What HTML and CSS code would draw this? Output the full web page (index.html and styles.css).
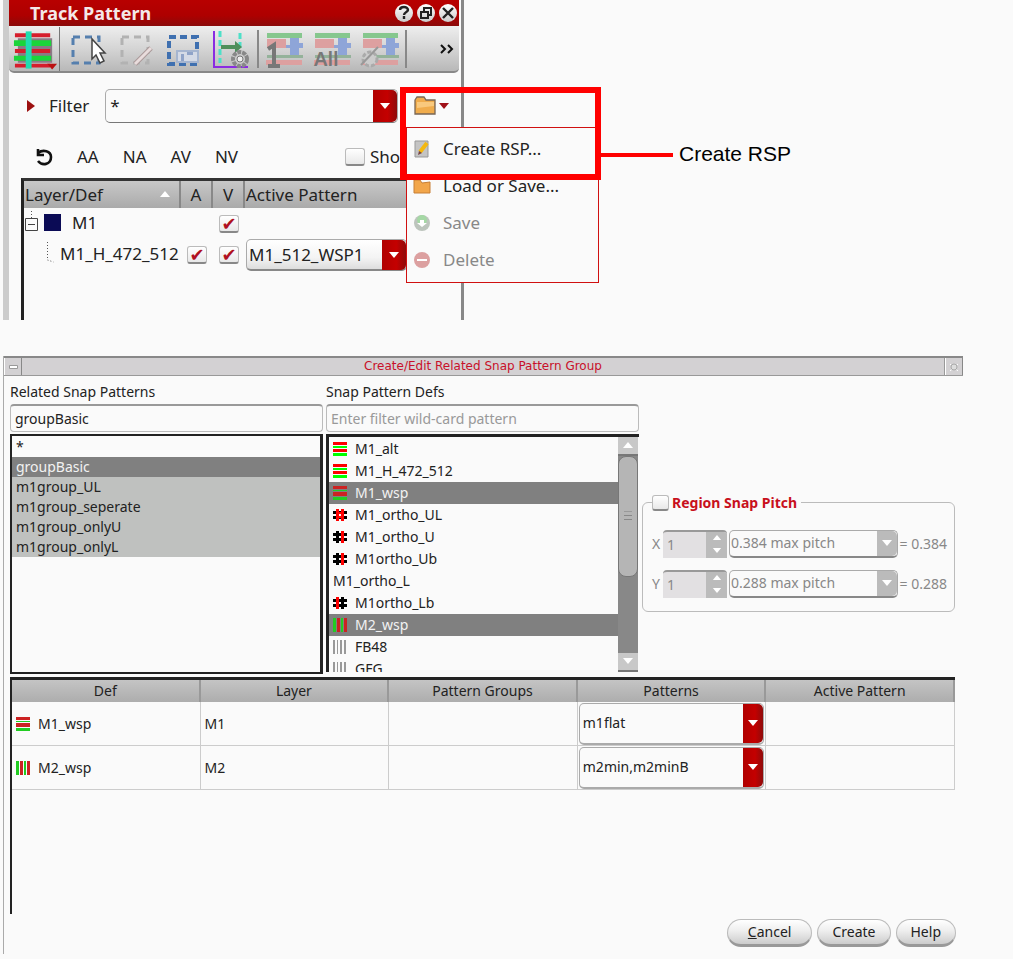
FILE: index.html
```html
<!DOCTYPE html>
<html lang="en">
<head>
<meta charset="utf-8">
<title>Create/Edit Related Snap Pattern Group</title>
<link rel="stylesheet" href="styles.css">
</head>
<body>
<svg class="defs" aria-hidden="true">
  <symbol id="bars-h" viewBox="0 0 14 14"><path fill="#f00" d="M0 0h14v3H0zM0 7h14v3H0z"/><path fill="#0f0" d="M0 4h14v2H0zM0 11h14v3H0z"/></symbol>
  <symbol id="bars-h-dark" viewBox="0 0 14 14"><path fill="#c22" d="M0 0h14v3H0zM0 6h14v4H0z"/><path fill="#2c2" d="M0 4h14v1H0zM0 11h14v3H0z"/></symbol>
  <symbol id="bars-v" viewBox="0 0 14 14"><path fill="#2c2" d="M0 0h3v14H0zM8 0h2v14H8z"/><path fill="#c22" d="M4 0h3v14H4zM11 0h3v14h-3z"/></symbol>
  <symbol id="bars-grey" viewBox="0 0 14 14"><path fill="#999" d="M0 0h2v14H0zM4 0h1v14H4zM7 0h2v14H7zM11 0h2v14h-2z"/></symbol>
  <symbol id="hash-red" viewBox="0 0 14 14"><path fill="#000" d="M0 3h14v3H0zM0 8h14v3H0z"/><path fill="#f00" d="M3 1h3v12H3zM8 1h3v12H8zM3 4h8v2H3zM3 8h8v2H3z"/></symbol>
  <symbol id="hash-right" viewBox="0 0 14 14"><path fill="#000" d="M0 3h14v3H0zM0 8h14v3H0zM3 1h3v12H3z"/><path fill="#f00" d="M8 1h3v12H8z"/></symbol>
  <symbol id="hash-left" viewBox="0 0 14 14"><path fill="#000" d="M0 3h14v3H0zM0 8h14v3H0zM8 1h3v12H8z"/><path fill="#f00" d="M3 1h3v12H3z"/></symbol>
  <symbol id="folder" viewBox="0 0 24 20"><path fill="#f0ac4c" stroke="#765" stroke-width="1.3" d="M1 4l2-3h7l2 3h9v14H1z"/><path fill="#f9c97d" d="M3 6h17v4L3 12z"/></symbol>
  <symbol id="down" viewBox="0 0 12 7"><path fill="currentColor" d="M1 0h10L6 6z"/></symbol>
  <symbol id="up" viewBox="0 0 12 7"><path fill="currentColor" d="M1 6h10L6 0z"/></symbol>
  <symbol id="swap" viewBox="0 0 38 38"><path fill="#86c78e" d="M1 2h35v5H1z"/><path fill="#dda0a0" d="M1 8h19v9H1zM0 29h36v5H0z"/><path fill="#8ea5d8" d="M24 7h9v5h4v5h-4v9h-9v-9h-4v-3h4z"/><path fill="#94b29a" d="M1 24h36v3H1z"/></symbol>
</svg>

<main class="page">
  <section class="track">
    <header class="track-head">
      <h1 class="track-title">Track Pattern</h1>
      <button class="orb" aria-label="Help"><svg viewBox="0 0 18 18"><path d="M5 6c0-4 8-4 8 0 0 2-4 2-4 5M9 12v3" fill="none" stroke="#222" stroke-width="2.4"/></svg></button>
      <button class="orb" aria-label="Float"><svg viewBox="0 0 18 18"><path d="M7 7V4h7v7h-3M4 8h7v6H4z" fill="none" stroke="#222" stroke-width="2"/></svg></button>
      <button class="orb" aria-label="Close"><svg viewBox="0 0 18 18"><path d="M4 4l10 10M14 4L4 14" fill="none" stroke="#222" stroke-width="2.4"/></svg></button>
    </header>

    <div class="toolbar">
      <button class="tool tool-first" aria-label="Tracks"><svg viewBox="0 0 48 44"><path fill="#8a7a86" d="M6 11h35v25H6z"/><path fill="#d61d2c" d="M3 6h36v4H3zM3 22h36v4H3zM3 37h36v4H3z"/><path fill="#1bd43a" d="M2 13h38v6H2zM2 29h38v5H2z"/><path fill="#1fddb0" d="M14 4h6v38h-6z"/><path fill="#b11" d="M36 37h10l-5 6z"/></svg></button>
      <button class="tool" aria-label="Select area"><svg viewBox="0 0 48 44"><path fill="none" stroke="#557fae" stroke-width="3" stroke-dasharray="7 5" d="M9 10h26v26H9z"/><path fill="#fff" stroke="#444" stroke-width="1.5" d="M28 12v20l4-4 4 8 4-2-4-8h5z"/></svg></button>
      <button class="tool" aria-label="Edit area"><svg viewBox="0 0 48 44"><path fill="none" stroke="#b2b2b2" stroke-width="3" stroke-dasharray="7 5" d="M10 10h26v26H10z"/><path stroke="#a99" stroke-width="5" d="M23 37l16-16"/><path stroke="#e8dcdc" stroke-width="3" d="M23 37l16-16"/></svg></button>
      <button class="tool" aria-label="Save area"><svg viewBox="0 0 48 44"><path fill="none" stroke="#3f70b0" stroke-width="4" stroke-dasharray="7 4" d="M9 10h28v27H9z"/><path fill="#d4dae6" stroke="#a5b5d0" stroke-width="2" d="M17 24h21v11H17z"/><path fill="#8fa3c8" d="M21 27h3v7h-3zM27 25h6v3h-6z"/></svg></button>
      <button class="tool" aria-label="Track options"><svg viewBox="0 0 48 44"><path stroke="#8a2be2" stroke-width="2" fill="none" d="M6 4v36h34"/><path stroke="#4de0c8" stroke-width="3" stroke-dasharray="6 3" d="M12 4v32M32 6v18"/><path fill="#4f8f5c" d="M13 18h14v-4l7 6-7 6v-4H13z"/><circle cx="32" cy="32" r="7" fill="#ccc" stroke="#888" stroke-width="4" stroke-dasharray="4 1"/><circle cx="32" cy="32" r="3" fill="#eee" stroke="#777"/></svg></button>
      <span class="sep"></span>
      <button class="tool" aria-label="Apply one"><svg viewBox="0 0 48 44"><use href="#swap" x="6" y="4" width="38" height="38"/><path fill="none" stroke="#777" stroke-width="4" d="M8 22l6-4v21M8 39h12"/></svg></button>
      <button class="tool tool-all"><svg viewBox="0 0 48 44"><use href="#swap" x="6" y="4" width="38" height="38"/></svg><span>All</span></button>
      <button class="tool" aria-label="Apply off"><svg viewBox="0 0 48 44"><use href="#swap" x="6" y="4" width="38" height="38"/><circle cx="14" cy="32" r="7" fill="#ccc" stroke="#aaa" stroke-width="3" stroke-dasharray="4 2"/><path stroke="#999" stroke-width="2" d="M5 38l17-18"/></svg></button>
      <span class="sep"></span>
      <button class="more" aria-label="More"><svg viewBox="0 0 14 10"><path fill="none" stroke="#111" stroke-width="2" d="M1 1l4 4-4 4M8 1l4 4-4 4"/></svg></button>
    </div>

    <div class="filter">
      <button class="disclose" aria-label="Expand filter"><svg viewBox="0 0 8 12"><path fill="#9c1010" d="M0 0l8 6-8 6z"/></svg></button>
      <label for="filter">Filter</label>
      <div class="combo combo-filter">
        <input id="filter" type="text" value="*">
        <button class="combo-arrow" aria-label="Filter history"><svg><use href="#down"/></svg></button>
      </div>
      <div class="folder-menu">
        <button class="folder-btn" aria-label="Pattern files"><svg class="i-folder"><use href="#folder"/></svg><svg class="i-down"><use href="#down"/></svg></button>
        <div class="menu" role="menu">
          <button role="menuitem"><svg viewBox="0 0 18 18"><path fill="#c4c4c4" stroke="#999" d="M2 1h13v16H2z"/><path stroke="#f4b810" stroke-width="4" d="M7 12l7-9"/><path fill="#744" d="M5 15l1-4 3 2z"/></svg>Create RSP...</button>
          <button role="menuitem"><svg viewBox="0 0 18 18"><path fill="#f2a64a" stroke="#c77f35" d="M1 3h6l2 3 8-1v11H1z"/></svg>Load or Save...</button>
          <button role="menuitem" disabled><svg viewBox="0 0 18 18"><circle cx="9" cy="9" r="8" fill="#bcc4bc"/><circle cx="9" cy="6" r="5" fill="#a5d8a5"/><path fill="#fff" d="M7 6h4v3h3l-5 4-5-4h3z"/></svg>Save</button>
          <button role="menuitem" disabled><svg viewBox="0 0 18 18"><circle cx="9" cy="9" r="8" fill="#dca0a0"/><path fill="#fff" d="M4 8h10v2H4z"/></svg>Delete</button>
        </div>
        <div class="callout"><span class="callout-line"></span><span class="callout-text">Create RSP</span></div>
      </div>
    </div>

    <div class="quick">
      <button class="undo" aria-label="Reset"><svg viewBox="0 0 18 18"><path fill="none" stroke="#111" stroke-width="2.6" d="M3 1v6h6M3 5c5-4 13-2 13 4 0 8-9 9-13 4"/></svg></button>
      <button>AA</button><button>NA</button><button>AV</button><button>NV</button>
      <label class="show"><input type="checkbox" class="check">Sho</label>
    </div>

    <table class="layers">
      <colgroup><col class="c-name"><col class="c-a"><col class="c-v"><col></colgroup>
      <thead><tr><th><span class="sort">Layer/Def<svg><use href="#up"/></svg></span></th><th class="mid">A</th><th class="mid">V</th><th class="active">Active Pattern</th></tr></thead>
      <tbody>
        <tr><td><span class="node"><svg class="i-tree" viewBox="0 0 16 24"><path fill="none" stroke="#444" d="M1.500 7.500h12v12h-12zM4 13.500h7"/><path stroke="#555" stroke-dasharray="1 2" d="M7.500 0v7"/></svg><span class="swatch"></span>M1</span></td><td></td><td class="mid"><input type="checkbox" class="check" aria-label="M1 visible" checked></td><td></td></tr>
        <tr><td><span class="node leaf"><svg class="i-leaf" viewBox="0 0 8 24"><path fill="none" stroke="#555" stroke-dasharray="1 2" d="M1.500 0v18l6 2"/></svg>M1_H_472_512</span></td><td class="mid"><input type="checkbox" class="check" aria-label="Active" checked></td><td class="mid"><input type="checkbox" class="check" aria-label="Visible" checked></td>
          <td class="active"><div class="combo combo-active"><select aria-label="Active pattern"><option>M1_512_WSP1</option></select><span class="combo-arrow"><svg><use href="#down"/></svg></span></div></td></tr>
      </tbody>
    </table>
  </section>

  <section class="dialog">
    <header class="dialog-head">
      <button aria-label="Window menu"><svg viewBox="0 0 16 16"><path fill="#fff" stroke="#999" d="M4.500 6.500h8v3h-8z"/></svg></button>
      <h2>Create/Edit Related Snap Pattern Group</h2>
      <button aria-label="Close"><svg viewBox="0 0 16 16"><path fill="none" stroke="#fff" d="M4 5l8 7M12 5l-8 7"/><circle cx="8" cy="8" r="3" fill="#ddd" stroke="#aaa"/></svg></button>
    </header>

    <div class="pickers">
      <label for="rsp">Related Snap Patterns</label>
      <label for="spd" class="col2">Snap Pattern Defs</label>
      <input id="rsp" class="field" type="text" value="groupBasic">
      <input id="spd" class="field" type="text" placeholder="Enter filter wild-card pattern">
      <ul class="groups" role="listbox" aria-label="Related Snap Patterns">
        <li role="option">*</li><li role="option" aria-selected="true">groupBasic</li><li role="option" class="shade">m1group_UL</li><li role="option" class="shade">m1group_seperate</li><li role="option" class="shade">m1group_onlyU</li><li role="option" class="shade">m1group_onlyL</li>
      </ul>
      <div class="defs-list">
        <ul role="listbox" aria-label="Snap Pattern Defs">
          <li role="option"><svg><use href="#bars-h"/></svg>M1_alt</li>
          <li role="option"><svg><use href="#bars-h"/></svg>M1_H_472_512</li>
          <li role="option" aria-selected="true"><svg><use href="#bars-h-dark"/></svg>M1_wsp</li>
          <li role="option"><svg><use href="#hash-red"/></svg>M1_ortho_UL</li>
          <li role="option"><svg><use href="#hash-right"/></svg>M1_ortho_U</li>
          <li role="option"><svg><use href="#hash-right"/></svg>M1ortho_Ub</li>
          <li role="option">M1_ortho_L</li>
          <li role="option"><svg><use href="#hash-left"/></svg>M1ortho_Lb</li>
          <li role="option" aria-selected="true"><svg><use href="#bars-v"/></svg>M2_wsp</li>
          <li role="option"><svg><use href="#bars-grey"/></svg>FB48</li>
          <li role="option"><svg><use href="#bars-grey"/></svg>GFG</li>
        </ul>
        <div class="scroll"><button aria-label="Scroll up"><svg><use href="#up"/></svg></button><span class="thumb"></span><button class="scroll-down" aria-label="Scroll down"><svg><use href="#down"/></svg></button></div>
      </div>
      <fieldset class="pitch">
        <legend><label><input type="checkbox" class="check">Region Snap Pitch</label></legend>
        <div class="pitch-row">
          <label for="px">X</label>
          <div class="spin"><input id="px" type="text" value="1" disabled><span class="spin-btns"><svg><use href="#up"/></svg><svg><use href="#down"/></svg></span></div>
          <div class="combo combo-off"><select aria-label="X pitch" disabled><option>0.384 max pitch</option></select><span class="combo-arrow"><svg><use href="#down"/></svg></span></div>
          <output>= 0.384</output>
        </div>
        <div class="pitch-row">
          <label for="py">Y</label>
          <div class="spin"><input id="py" type="text" value="1" disabled><span class="spin-btns"><svg><use href="#up"/></svg><svg><use href="#down"/></svg></span></div>
          <div class="combo combo-off"><select aria-label="Y pitch" disabled><option>0.288 max pitch</option></select><span class="combo-arrow"><svg><use href="#down"/></svg></span></div>
          <output>= 0.288</output>
        </div>
      </fieldset>
    </div>

    <div class="grid-wrap">
      <table class="grid">
        <thead><tr><th>Def</th><th>Layer</th><th>Pattern Groups</th><th>Patterns</th><th>Active Pattern</th></tr></thead>
        <tbody>
          <tr><td class="def"><svg><use href="#bars-h-dark"/></svg>M1_wsp</td><td>M1</td><td></td><td class="pick"><div class="combo"><select aria-label="Patterns for M1_wsp"><option>m1flat</option></select><span class="combo-arrow"><svg><use href="#down"/></svg></span></div></td><td></td></tr>
          <tr><td class="def"><svg><use href="#bars-v"/></svg>M2_wsp</td><td>M2</td><td></td><td class="pick"><div class="combo"><select aria-label="Patterns for M2_wsp"><option>m2min,m2minB</option></select><span class="combo-arrow"><svg><use href="#down"/></svg></span></div></td><td></td></tr>
        </tbody>
      </table>
    </div>

    <footer class="actions">
      <button class="cancel"><u>C</u>ancel</button><button>Create</button><button>Help</button>
    </footer>
  </section>
</main>
</body>
</html>
```
FILE: styles.css
```css
* { box-sizing: border-box; }
body { margin: 0; background: #fafafa; color: #222; font: 14px/20px "Noto Sans", "Open Sans", sans-serif; }
button, input, select { font: inherit; color: inherit; margin: 0; padding: 0; border: 0; background: none; border-radius: 0; }
button { cursor: pointer; }
svg { display: block; flex: none; }
ul { list-style: none; margin: 0; padding: 0; }
h1, h2 { margin: 0; }
table { border-collapse: separate; border-spacing: 0; table-layout: fixed; width: 100%; }
.defs { display: none; }
.page { min-height: 100vh; display: flex; flex-direction: column; gap: 36px; padding: 0 0 5px 3px; }

/* Track pattern panel */
.track { width: 100%; max-width: 461px; min-height: 320px; display: flex; flex-direction: column; border-left: 6px solid #ccc; border-right: 3px solid #888; font-size: 17px; line-height: 24px; }
.track-head { display: flex; align-items: center; gap: 4px; height: 26px; margin-right: 2px; padding: 0 2px 0 21px; background: linear-gradient(#b80000, #ae0000 60%, #8a0a0a); }
.track-title { flex: 1; font-size: 18px; line-height: 24px; font-weight: 700; color: #f4e8e8; }
.orb { width: 18px; height: 18px; border-radius: 9px; background: linear-gradient(#fff, #ccc); }
.orb svg { width: 18px; height: 18px; }
.toolbar { display: flex; align-items: center; height: 47px; margin-right: 2px; padding: 0 3px; border-bottom: 2px solid #888; border-radius: 0 0 5px 5px; background: linear-gradient(#eee, #d2d2d2 55%, #b8b8b8); }
.tool { width: 48px; height: 44px; flex: none; }
.tool svg { width: 48px; height: 44px; }
.tool-first { margin-right: 4px; border-right: 1px solid #777; }
.tool-first svg { width: 47px; }
.tool-all { display: grid; }
.tool-all > * { grid-area: 1 / 1; }
.tool-all span { align-self: end; justify-self: start; padding-left: 6px; font-size: 20px; line-height: 24px; font-weight: 600; color: #777; }
.sep { flex: none; width: 2px; height: 38px; margin: 0 1px; background: #888; }
.more { margin-left: auto; padding-right: 2px; }
.more svg { width: 14px; height: 10px; }

.filter { display: flex; align-items: center; height: 34px; margin-top: 16px; padding-left: 18px; }
.disclose svg { width: 8px; height: 12px; }
.filter > label { margin: 0 16px 0 14px; }
.combo { display: grid; min-width: 0; border: 1px solid #aaa; border-radius: 5px; background: #fafafa; }
.combo > select, .combo > input { grid-area: 1 / 1; width: 100%; appearance: none; outline: 0; }
.combo-arrow { grid-area: 1 / 1; justify-self: end; display: grid; place-items: center; width: 24px; border-radius: 0 5px 5px 0; background: linear-gradient(90deg, #b00000, #c40000 60%, #8e0b0b); color: #fff; pointer-events: none; }
.combo-arrow svg { width: 12px; height: 7px; }
.combo-filter { flex: 1; height: 34px; border-bottom-color: #777; }
.combo-filter > input { padding-left: 4px; }
.folder-menu { position: relative; width: 60px; margin-left: 3px; padding-left: 13px; }
.folder-btn { display: flex; align-items: center; }
.i-folder { width: 24px; height: 20px; }
.i-down { width: 12px; height: 7px; color: #a01018; }
.menu { position: absolute; left: 5px; top: 31px; width: 193px; padding: 2px 0 4px; border: 1px solid #d01010; background: #fafafa; }
.menu button { display: flex; align-items: center; gap: 12px; width: 100%; height: 37px; padding-left: 6px; color: #222; }
.menu button:disabled { color: #888; }
.menu svg { width: 18px; height: 18px; }
.callout { position: absolute; left: -1px; top: -9px; width: 201px; height: 93px; border: 6px solid #f00; display: flex; align-items: flex-start; pointer-events: none; }
.callout-line { flex: none; width: 72px; height: 4px; margin: 60px 6px 0 195px; background: #f00; }
.callout-text { margin-top: 49px; white-space: nowrap; font: 21px/24px "Liberation Sans", Arial, sans-serif; color: #000; }

.quick { display: flex; align-items: center; gap: 24px; height: 24px; margin: 22px 61px 0 26px; }
.undo svg { width: 18px; height: 18px; }
.show { display: flex; align-items: center; gap: 5px; margin-left: auto; }
.check { appearance: none; flex: none; width: 20px; height: 18px; border: 1px solid #bbb; border-bottom: 2px solid #888; border-radius: 3px; background: linear-gradient(#fff, #e8e8e8); display: inline-grid; place-items: center; vertical-align: middle; }
.check:checked::before { content: "✔"; font: 18px/14px "DejaVu Sans", sans-serif; color: #b01020; }

.layers { flex: 1; margin: 9px 4px 0 12px; width: auto; border-top: 3px solid #333; border-left: 3px solid #222; height: 142px; }
.layers .c-name { width: 157px; }
.layers .c-a, .layers .c-v { width: 32px; }
.layers th { height: 27px; padding: 0 1px; font-weight: 400; text-align: left; background: linear-gradient(#c8c8c8, #aaa); border-right: 2px solid #888; }
.layers td { padding: 0; height: 31px; vertical-align: top; line-height: 30px; }
.layers .mid { text-align: center; }
.layers .active { padding-left: 1px; }
.layers tbody tr:last-child td { height: auto; }
.sort { display: flex; align-items: center; justify-content: space-between; padding-right: 7px; color: #222; }
.sort svg { width: 12px; height: 7px; color: #fff; }
.node { display: flex; align-items: center; height: 29px; }
.i-tree { width: 16px; height: 24px; }
.swatch { width: 17px; height: 17px; margin: 0 11px 0 4px; background: #0b0b55; }
.leaf { padding-left: 22px; }
.i-leaf { width: 8px; height: 24px; margin-right: 6px; }
.combo-active { width: 161px; height: 32px; background: linear-gradient(#fff, #f4f4f4 60%, #ddd); border-bottom: 2px solid #888; }
.combo-active > select { padding-left: 2px; }

/* Snap pattern group dialog */
.dialog { flex: 1; display: flex; flex-direction: column; margin-right: 50px; border-left: 1px solid #aaa; }
.dialog-head { display: flex; height: 20px; border-top: 2px solid #888; border-bottom: 1px solid #999; background: #d3d1d3; }
.dialog-head button { width: 18px; border-right: 1px solid #888; border-left: 1px solid #fff; }
.dialog-head svg { width: 16px; height: 16px; }
.dialog-head h2 { flex: 1; text-align: center; font: 12px/16px "DejaVu Sans", sans-serif; color: #c8102a; border-right: 1px solid #999; }
.pickers { display: grid; grid-template-columns: repeat(3, minmax(0, 1fr)); grid-template-rows: 20px 28px 240px; column-gap: 3px; row-gap: 2px; padding: 6px 8px 0 6px; }
.pickers > label { grid-column: 1; }
.pickers > .col2 { grid-column: 2 / 4; }
.field { width: 100%; height: 28px; padding: 0 4px; border: 1px solid #bbb; border-top: 2px solid #999; border-radius: 4px; outline: 0; grid-column: 1; }
.field + .field { grid-column: 2; }
.field::placeholder { color: #999; opacity: 1; }
.groups { grid-column: 1; padding-top: 1px; border: 2px solid #222; border-right-width: 3px; }
.groups li { height: 20px; padding-left: 4px; }
.groups .shade { background: #bfc1bf; }
[aria-selected="true"] { background: #808080; color: #f2f2f2; }
.defs-list { display: flex; height: 238px; overflow: hidden; border-top: 3px solid #222; border-left: 3px solid #222; padding-right: 1px; }
.defs-list ul { flex: 1; padding-top: 1px; overflow: hidden; }
.defs-list li { display: flex; align-items: center; gap: 8px; height: 22px; padding-left: 4px; }
.defs-list li svg { width: 14px; height: 14px; }
.scroll { display: flex; flex-direction: column; width: 20px; background: #888; }
.scroll button { display: grid; place-items: center; height: 19px; background: #c8c8c8; color: #fff; border-bottom: 2px solid #777; }
.scroll svg { width: 12px; height: 7px; }
.scroll-down { margin-top: auto; }
.thumb { height: 121px; border: 1px solid #777; border-radius: 8px; background: linear-gradient(#999, #999) center 54px / 8px 1px no-repeat, linear-gradient(#888, #888) center 58px / 8px 1px no-repeat, linear-gradient(#888, #888) center 62px / 8px 1px no-repeat, #b5b5b5; }
.pitch { grid-column: 3; align-self: center; min-width: 0; margin: 0 0 4px; padding: 17px 7px 13px 9px; border: 1px solid #bbb; border-radius: 6px; }
.pitch legend { padding: 0 4px 0 0; color: #c8101c; font-weight: 700; }
.pitch legend label { display: flex; align-items: center; gap: 3px; }
.pitch legend .check { width: 17px; height: 16px; }
.pitch-row { display: flex; align-items: center; gap: 2px; color: #888; }
.pitch-row + .pitch-row { margin-top: 12px; }
.pitch-row > label { width: 9px; }
.pitch-row output { white-space: nowrap; }
.spin { display: flex; flex: none; width: 64px; height: 28px; border-top: 2px solid #999; border-radius: 4px 4px 0 0; background: #e2e0e2; overflow: hidden; }
.spin input { flex: 1; min-width: 0; padding-left: 4px; color: #888; }
.spin-btns { display: flex; flex-direction: column; justify-content: space-around; align-items: center; width: 21px; background: #bbb; color: #fff; }
.spin-btns svg { width: 10px; height: 6px; }
.combo-off { flex: 1; height: 28px; border-bottom: 2px solid #888; }
.combo-off > select { padding-left: 1px; color: #888; opacity: 1; }
.combo-off > .combo-arrow { width: 20px; background: #bbb; }

.grid-wrap { flex: 1; margin: 3px 8px 0 6px; border-top: 3px solid #222; border-left: 2px solid #222; }
.grid th { height: 22px; padding: 0; font-weight: 400; background: linear-gradient(#c4c4c4, #adadad); border-right: 2px solid #999; }
.grid td { height: 44px; padding: 0 4px; border-right: 1px solid #ccc; border-bottom: 1px solid #ccc; }
.grid .def svg { display: inline-block; width: 14px; height: 14px; margin-right: 8px; vertical-align: -2px; }
.grid .pick { padding: 0 1px; }
.grid .combo { height: 42px; border-bottom: 2px solid #aaa; }
.grid .combo > select { padding-left: 3px; }
.grid .combo-arrow { width: 20px; }
.actions { display: flex; justify-content: flex-end; gap: 5px; padding: 5px 7px 7px; }
.actions button { height: 28px; padding: 0 14px; border: 1px solid #bbb; border-bottom: 3px solid #999; border-radius: 14px; background: linear-gradient(#fff, #eee 45%, #ccc); }
.actions .cancel { padding: 0 20px; }
```
